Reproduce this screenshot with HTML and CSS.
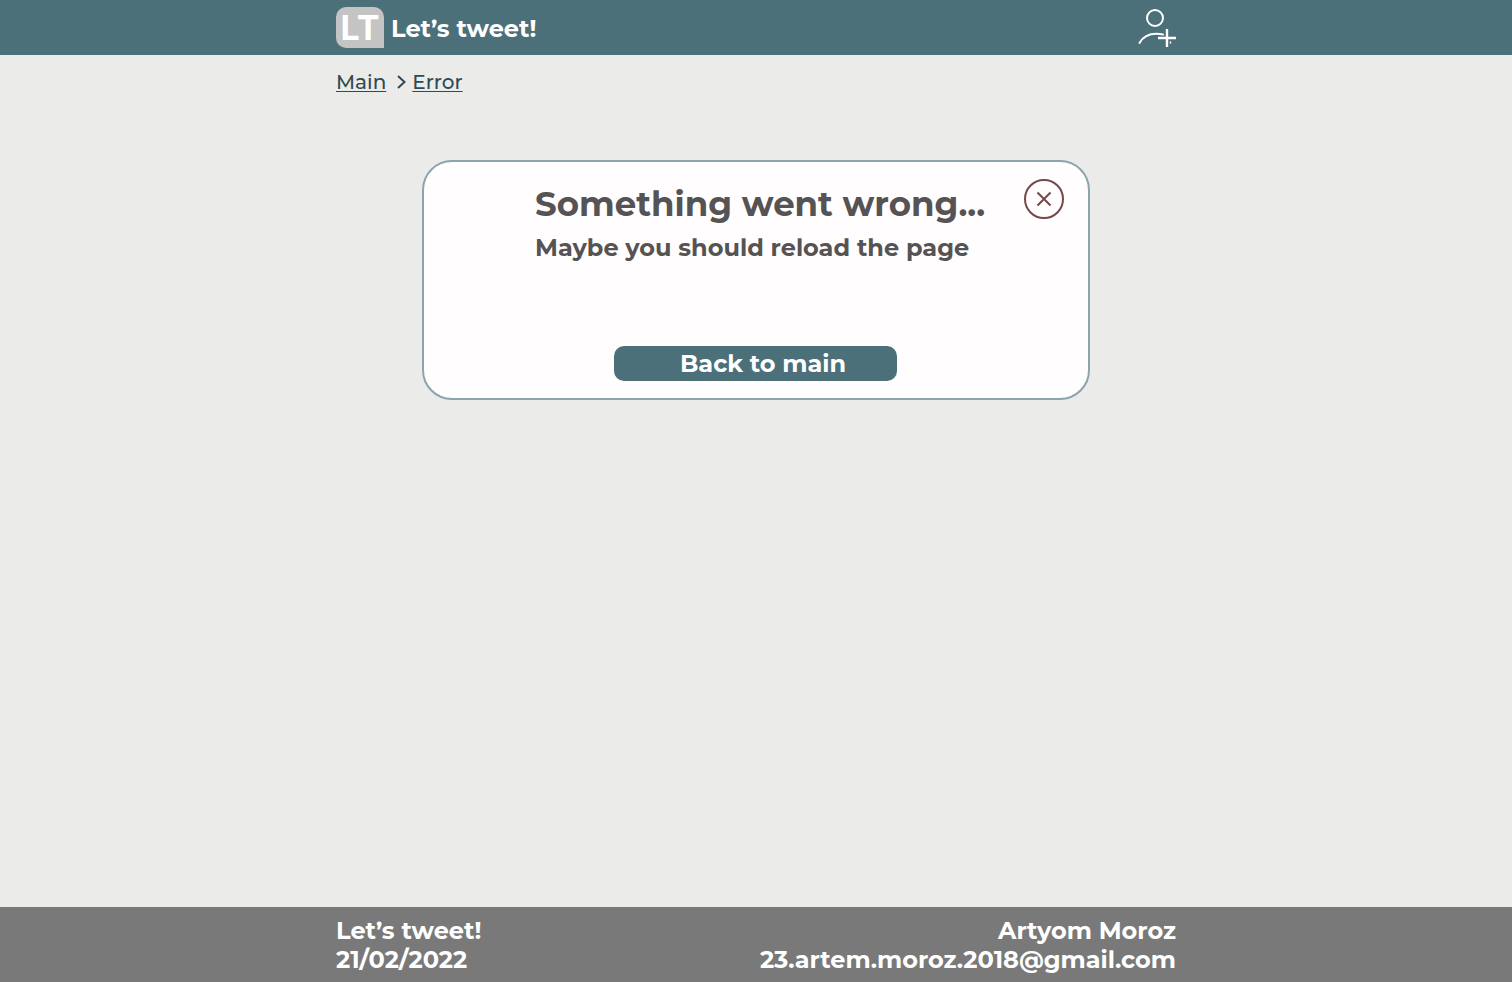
FILE: index.html
```html
<!DOCTYPE html>
<html lang="en">
<head>
  <meta charset="utf-8">
  <meta name="viewport" content="width=device-width, initial-scale=1">
  <title>Let’s tweet!</title>
  <link rel="stylesheet" href="styles.css">
</head>
<body>
  <header class="header">
    <div class="container header-row">
      <a class="brand" href="#">
        <span class="logo">LT</span>
        <span class="brand-name">Let’s tweet!</span>
      </a>
      <button class="icon-button add-user" type="button" aria-label="Sign up">
        <svg width="40" height="41" viewBox="0 0 40 41" fill="none" stroke="currentColor" stroke-width="2" stroke-linecap="round">
          <circle cx="19" cy="11" r="8"/>
          <path d="M3.500 36C8 28 16 25.500 27 27.500"/>
          <path d="M31 22v18M22 31h18" stroke-width="2.400" stroke-linecap="butt"/>
          <path d="M34.500 34.500v2" stroke-width="1.500" stroke-linecap="butt"/>
        </svg>
      </button>
    </div>
  </header>

  <main class="container main">
    <nav class="crumbs" aria-label="Breadcrumb">
      <a class="crumb" href="#">Main</a>
      <svg class="chevron" width="10" height="14" viewBox="0 0 10 14" fill="none" stroke="currentColor" stroke-width="2"><path d="M1 1L7.500 7L1 13"/></svg>
      <a class="crumb" href="#">Error</a>
    </nav>

    <section class="card">
      <div class="message">
        <h1 class="title">Something went wrong...</h1>
        <p class="hint">Maybe you should reload the page</p>
      </div>
      <button class="icon-button close" type="button" aria-label="Close">
        <svg width="40" height="40" viewBox="0 0 40 40" fill="none" stroke="currentColor" stroke-width="2">
          <circle cx="20" cy="20" r="19"/>
          <path d="M13.500 13.500l13 13M26.500 13.500l-13 13"/>
        </svg>
      </button>
      <button class="back" type="button">Back to main</button>
    </section>
  </main>

  <footer class="footer">
    <div class="container footer-row">
      <div class="footer-info">
        <span>Let’s tweet!</span>
        <span>21/02/2022</span>
      </div>
      <div class="footer-info footer-author">
        <span>Artyom Moroz</span>
        <a class="mail" href="mailto:23.artem.moroz.2018@gmail.com">23.artem.moroz.2018@gmail.com</a>
      </div>
    </div>
  </footer>
</body>
</html>
```

FILE: styles.css
```css
* {
  box-sizing: border-box;
}

body {
  display: flex;
  flex-direction: column;
  min-height: 100vh;
  margin: 0;
  background: #ebebe9;
  color: #555354;
  font-family: Montserrat, Inter, sans-serif;
}

.container {
  width: 100%;
  max-width: 840px;
  margin: 0 auto;
}

.header {
  background: #4b7079;
  color: #fff;
}

.header-row {
  display: flex;
  align-items: center;
  justify-content: space-between;
  padding: 6px 0 7px;
}

.brand {
  display: flex;
  align-items: center;
  gap: 7px;
  color: inherit;
  text-decoration: none;
}

.logo {
  width: 48px;
  border-radius: 10px 10px 0 10px;
  background: #c4c4c4;
  font-family: Inter, sans-serif;
  font-size: 34px;
  font-weight: 700;
  line-height: 41px;
  text-align: center;
}

.brand-name {
  padding-top: 4px;
  font-size: 24px;
  font-weight: 700;
  line-height: 30px;
}

.icon-button {
  display: flex;
  padding: 0;
  border: 0;
  background: none;
  color: inherit;
}

.add-user {
  padding-top: 1px;
}

.main {
  flex: 1;
}

.crumbs {
  display: flex;
  align-items: center;
  padding: 15px 0;
  color: #2f4b52;
  font-size: 20px;
  font-weight: 500;
  line-height: 24px;
}

.crumb {
  color: inherit;
  text-decoration-thickness: 1px;
  text-underline-offset: 2px;
}

.chevron {
  margin: 0 5px 0 11px;
}

.card {
  display: grid;
  grid-template-columns: 1fr auto;
  grid-template-rows: 1fr auto;
  max-width: 668px;
  min-height: 240px;
  margin: 51px auto;
  padding: 17px 24px 17px 111px;
  border: 2px solid #8ba5ac;
  border-radius: 30px;
  background: #fffdfe;
}

.title {
  margin: 0;
  padding-top: 2px;
  font-size: 34px;
  font-weight: 700;
  line-height: 46px;
}

.hint {
  margin: 0;
  padding-top: 6px;
  font-size: 24px;
  font-weight: 700;
  line-height: 30px;
}

.close {
  align-self: start;
  color: #774648;
}

.back {
  grid-column: 1 / -1;
  justify-self: center;
  width: 283px;
  margin-right: 88px;
  padding: 0 0 0 15px;
  border: 0;
  border-radius: 10px;
  background: #4b7079;
  color: #fff;
  font: inherit;
  font-size: 24px;
  font-weight: 700;
  line-height: 35px;
}

.footer {
  background: #797979;
  color: #fff;
  font-size: 24px;
  font-weight: 700;
  line-height: 29px;
}

.footer-row {
  display: flex;
  justify-content: space-between;
  padding: 9px 0 8px;
}

.footer-info {
  display: flex;
  flex-direction: column;
}

.footer-author {
  text-align: right;
}

.mail {
  color: inherit;
  text-decoration: none;
}
```
